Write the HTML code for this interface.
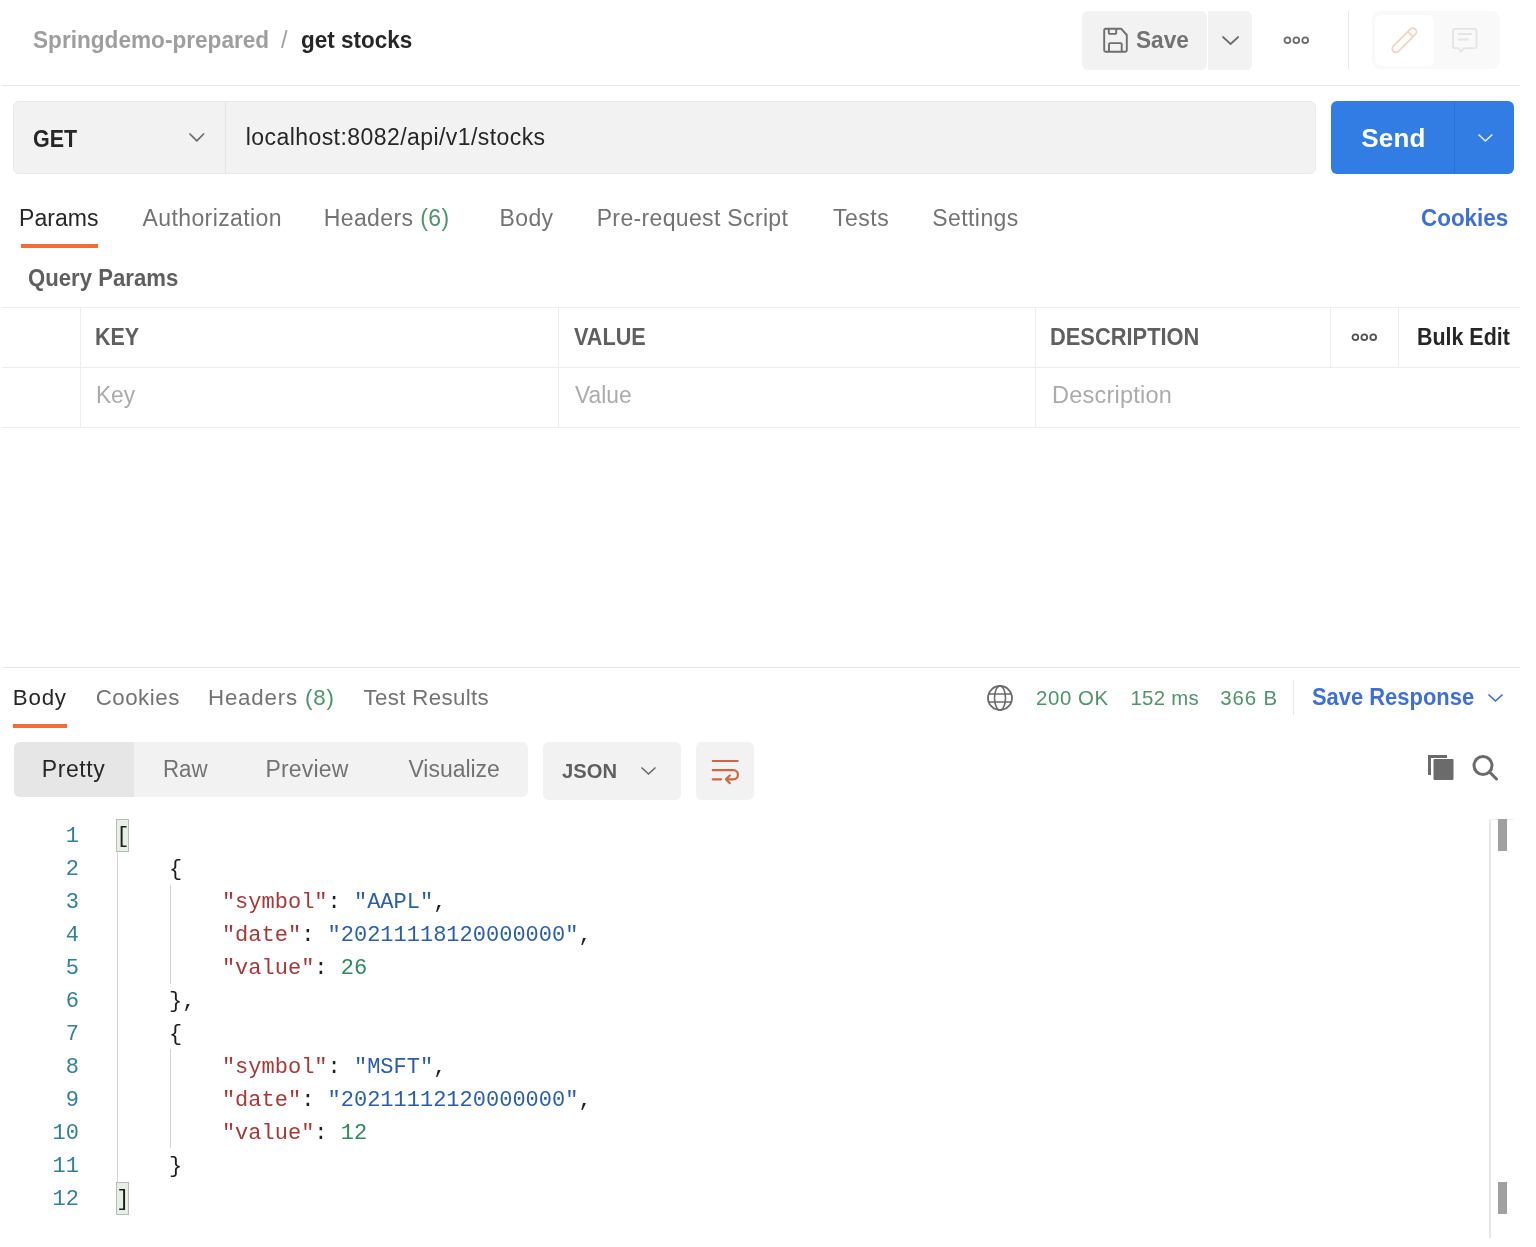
<!DOCTYPE html>
<html><head><meta charset="utf-8">
<style>
html,body{margin:0;padding:0;width:1536px;height:1247px;overflow:hidden;background:#fff;}
body{position:relative;font-family:"Liberation Sans",sans-serif;}
.a{position:absolute;box-sizing:border-box;}
.t{position:absolute;white-space:pre;line-height:normal;font-family:"Liberation Sans",sans-serif;}
.hl{position:absolute;height:1px;background:#e6e6e6;}
.vl{position:absolute;width:1px;background:#e6e6e6;}
svg{position:absolute;overflow:visible;}
.code{position:absolute;left:0;top:0;font-family:"Liberation Mono",monospace;font-size:22px;white-space:pre;line-height:normal;}
.ln{position:absolute;font-family:"Liberation Mono",monospace;font-size:22px;color:#327f9c;text-align:right;width:80px;white-space:pre;line-height:normal;}
.k{color:#a83838}.s{color:#2a5eab}.n{color:#2e8a5c}.p{color:#1e1e1e}
</style></head><body style="filter:blur(0.6px)">
<!-- header -->
<div class="hl" style="left:2px;top:85px;width:1518px;"></div>
<div class="a" style="left:1082px;top:11px;width:124.5px;height:59px;background:#f2f2f2;border-radius:6px;"></div>
<div class="a" style="left:1208px;top:11px;width:44px;height:59px;background:#f2f2f2;border-radius:0 6px 6px 0;"></div>
<!-- save icon -->
<svg style="left:1102px;top:27px" width="26" height="27" viewBox="0 0 26 27">
 <path d="M3.7 1.7 H19.1 L24.8 8 V23.3 Q24.8 24.8 23.3 24.8 H3.7 Q2.2 24.8 2.2 23.3 V3.2 Q2.2 1.7 3.7 1.7 Z" fill="none" stroke="#6e6e6e" stroke-width="1.9" stroke-linejoin="round"/>
 <path d="M6.8 1.7 V5.9 Q6.8 6.9 7.8 6.9 H13.2 Q14.2 6.9 14.2 5.9 V1.7" fill="none" stroke="#6e6e6e" stroke-width="1.9"/>
 <path d="M7 24.8 V17.1 Q7 16.1 8 16.1 H18.7 Q19.7 16.1 19.7 17.1 V24.8" fill="none" stroke="#6e6e6e" stroke-width="1.9"/>
</svg>
<svg style="left:1220.2px;top:34px" width="21.2" height="13.0"><path d="M3.0 3.0 L10.6 10.0 L18.2 3.0" fill="none" stroke="#6b6b6b" stroke-width="1.7" stroke-linecap="round" stroke-linejoin="round"/></svg>
<!-- ooo -->
<svg style="left:1283px;top:36px" width="27" height="9" viewBox="0 0 27 9">
 <circle cx="4.4" cy="4.2" r="2.9" fill="none" stroke="#6b6b6b" stroke-width="1.8"/>
 <circle cx="13.3" cy="4.2" r="2.9" fill="none" stroke="#6b6b6b" stroke-width="1.8"/>
 <circle cx="22.2" cy="4.2" r="2.9" fill="none" stroke="#6b6b6b" stroke-width="1.8"/>
</svg>
<div class="vl" style="left:1348px;top:11px;height:58px;"></div>
<div class="a" style="left:1372px;top:11px;width:128px;height:58px;background:#f9f9f9;border-radius:8px;"></div>
<div class="a" style="left:1375px;top:15px;width:59px;height:51px;background:#fff;border-radius:6px;"></div>
<svg style="left:1388px;top:24px" width="32" height="32" viewBox="0 0 32 32">
 <g transform="rotate(-45 16.35 16.25)">
  <rect x="0.75" y="12.6" width="31.2" height="7.3" rx="3.65" fill="none" stroke="#f7d0c2" stroke-width="1.7"/>
  <path d="M25 12.6 V19.9" fill="none" stroke="#f7d0c2" stroke-width="1.7"/>
 </g>
</svg>
<svg style="left:1450px;top:25px" width="30" height="30" viewBox="0 0 30 30">
 <path d="M4.5 3.8 H25 Q26.5 3.8 26.5 5.3 V21.7 Q26.5 23.2 25 23.2 H14 L11 26.5 L8 23.2 H4.5 Q3 23.2 3 21.7 V5.3 Q3 3.8 4.5 3.8 Z" fill="none" stroke="#e4e4e4" stroke-width="1.8" stroke-linejoin="round"/>
 <path d="M7.7 9 H22 M7.7 14.5 H18.5" fill="none" stroke="#e4e4e4" stroke-width="1.8"/>
</svg>
<!-- url row -->
<div class="a" style="left:13px;top:101px;width:1303px;height:73px;background:#f2f2f2;border:1px solid #e9e9e9;border-radius:6px;"></div>
<div class="vl" style="left:225px;top:102px;height:71px;background:#e4e4e4;"></div>
<svg style="left:186.6px;top:131.2px" width="19.6" height="12.8"><path d="M3.0 3.0 L9.8 9.8 L16.6 3.0" fill="none" stroke="#6b6b6b" stroke-width="1.7" stroke-linecap="round" stroke-linejoin="round"/></svg>
<div class="a" style="left:1331px;top:101px;width:183px;height:73px;background:#327de3;border-radius:6px;"></div>
<div class="vl" style="left:1454px;top:101px;height:73px;background:#2e72d2;"></div>
<svg style="left:1475.6px;top:131.6px" width="18.8" height="12.0"><path d="M3.0 3.0 L9.4 9.0 L15.8 3.0" fill="none" stroke="#e2ecfb" stroke-width="1.7" stroke-linecap="round" stroke-linejoin="round"/></svg>
<!-- tabs -->
<div class="a" style="left:21px;top:243.5px;width:77px;height:4px;background:#f26b3a;"></div>
<!-- table -->
<div class="hl" style="left:2px;top:307px;width:1518px;background:#ededed;"></div>
<div class="hl" style="left:2px;top:367px;width:1518px;background:#ededed;"></div>
<div class="hl" style="left:2px;top:427px;width:1518px;background:#ededed;"></div>
<div class="vl" style="left:80px;top:307px;height:121px;background:#ededed;"></div>
<div class="vl" style="left:558px;top:307px;height:121px;background:#ededed;"></div>
<div class="vl" style="left:1035px;top:307px;height:121px;background:#ededed;"></div>
<div class="vl" style="left:1330px;top:307px;height:61px;background:#ededed;"></div>
<div class="vl" style="left:1398px;top:307px;height:61px;background:#ededed;"></div>
<svg style="left:1351px;top:333px" width="27" height="9" viewBox="0 0 27 9">
 <circle cx="4.4" cy="4.2" r="2.9" fill="none" stroke="#505050" stroke-width="1.8"/>
 <circle cx="13.3" cy="4.2" r="2.9" fill="none" stroke="#505050" stroke-width="1.8"/>
 <circle cx="22.2" cy="4.2" r="2.9" fill="none" stroke="#505050" stroke-width="1.8"/>
</svg>
<!-- response -->
<div class="hl" style="left:2px;top:667px;width:1518px;"></div>
<div class="a" style="left:13px;top:723.5px;width:54px;height:4px;background:#f26b3a;"></div>
<svg style="left:986px;top:684px" width="28" height="28" viewBox="0 0 28 28">
 <circle cx="14" cy="14" r="12" fill="none" stroke="#6b6b6b" stroke-width="1.8"/>
 <ellipse cx="14" cy="14" rx="5.5" ry="12" fill="none" stroke="#6b6b6b" stroke-width="1.6"/>
 <path d="M2.5 10 H25.5 M2.5 18 H25.5" fill="none" stroke="#6b6b6b" stroke-width="1.6"/>
</svg>
<div class="vl" style="left:1293px;top:680px;height:35px;"></div>
<svg style="left:1486px;top:691.8px" width="19.0" height="12.0"><path d="M3.0 3.0 L9.5 9.0 L16.0 3.0" fill="none" stroke="#3d6fd4" stroke-width="1.7" stroke-linecap="round" stroke-linejoin="round"/></svg>
<div class="a" style="left:13.5px;top:742px;width:514px;height:55px;background:#f2f2f2;border-radius:6px;"></div>
<div class="a" style="left:13.5px;top:742px;width:120.5px;height:55px;background:#e6e6e6;border-radius:6px 0 0 6px;"></div>
<div class="a" style="left:543px;top:742px;width:138px;height:58px;background:#f2f2f2;border-radius:6px;"></div>
<svg style="left:639px;top:765px" width="19.0" height="12.0"><path d="M3.0 3.0 L9.5 9.0 L16.0 3.0" fill="none" stroke="#6b6b6b" stroke-width="1.7" stroke-linecap="round" stroke-linejoin="round"/></svg>
<div class="a" style="left:696px;top:742px;width:58px;height:58px;background:#f2f2f2;border-radius:6px;"></div>
<svg style="left:711px;top:759px" width="29" height="27" viewBox="0 0 29 27">
 <path d="M1.8 2 H26.7 M1.8 11.2 H22.4 A4.55 4.55 0 0 1 22.4 20.3 H15.5 M1.8 20.3 H10.1" fill="none" stroke="#d2653f" stroke-width="2.2" stroke-linecap="round"/>
 <path d="M18.8 16.4 L15 20.3 L18.8 24.2" fill="none" stroke="#d2653f" stroke-width="2.2" stroke-linecap="round" stroke-linejoin="round"/>
</svg>
<svg style="left:1427px;top:754px" width="28" height="27" viewBox="0 0 28 27">
 <path d="M2.5 21 V2.5 H20" fill="none" stroke="#6b6b6b" stroke-width="3"/>
 <rect x="6.5" y="5" width="20" height="21" rx="1" fill="#6b6b6b"/>
</svg>
<svg style="left:1470px;top:753px" width="30" height="30" viewBox="0 0 30 30">
 <circle cx="13" cy="12.5" r="9" fill="none" stroke="#6b6b6b" stroke-width="3"/>
 <path d="M19.5 19 L26.5 26" fill="none" stroke="#6b6b6b" stroke-width="3" stroke-linecap="round"/>
</svg>
<!-- editor -->
<div class="a" style="left:1489px;top:819px;width:2px;height:419px;background:#e6e6e6;"></div>
<div class="a" style="left:1489px;top:819px;width:25px;height:1px;background:#f0f0f0;"></div>
<div class="a" style="left:1498px;top:819px;width:9px;height:32px;background:#a0a0a0;"></div>
<div class="a" style="left:1498px;top:1181.5px;width:9px;height:32.5px;background:#a0a0a0;"></div>
<div class="a" style="left:116.5px;top:851px;width:1px;height:331px;background:#d3d3d3;"></div>
<div class="a" style="left:169.5px;top:884.5px;width:1px;height:99px;background:#d3d3d3;"></div>
<div class="a" style="left:169.5px;top:1049px;width:1px;height:99px;background:#d3d3d3;"></div>
<div class="a" style="left:116px;top:819px;width:13px;height:33px;background:#e5efe5;border:1px solid #b9b9b9;"></div>
<div class="a" style="left:116px;top:1181.5px;width:13px;height:33px;background:#e5efe5;border:1px solid #b9b9b9;"></div>
<div class="ln" style="left:-1px;top:824.30px">1</div>
<div class="code" style="left:116.3px;top:824.30px"><span class="p">[</span></div>
<div class="ln" style="left:-1px;top:857.25px">2</div>
<div class="code" style="left:116.3px;top:857.25px"><span class="p">    {</span></div>
<div class="ln" style="left:-1px;top:890.20px">3</div>
<div class="code" style="left:116.3px;top:890.20px"><span class="p">        </span><span class="k">"symbol"</span><span class="p">: </span><span class="s">"AAPL"</span><span class="p">,</span></div>
<div class="ln" style="left:-1px;top:923.15px">4</div>
<div class="code" style="left:116.3px;top:923.15px"><span class="p">        </span><span class="k">"date"</span><span class="p">: </span><span class="s">"20211118120000000"</span><span class="p">,</span></div>
<div class="ln" style="left:-1px;top:956.10px">5</div>
<div class="code" style="left:116.3px;top:956.10px"><span class="p">        </span><span class="k">"value"</span><span class="p">: </span><span class="n">26</span></div>
<div class="ln" style="left:-1px;top:989.05px">6</div>
<div class="code" style="left:116.3px;top:989.05px"><span class="p">    },</span></div>
<div class="ln" style="left:-1px;top:1022.00px">7</div>
<div class="code" style="left:116.3px;top:1022.00px"><span class="p">    {</span></div>
<div class="ln" style="left:-1px;top:1054.95px">8</div>
<div class="code" style="left:116.3px;top:1054.95px"><span class="p">        </span><span class="k">"symbol"</span><span class="p">: </span><span class="s">"MSFT"</span><span class="p">,</span></div>
<div class="ln" style="left:-1px;top:1087.90px">9</div>
<div class="code" style="left:116.3px;top:1087.90px"><span class="p">        </span><span class="k">"date"</span><span class="p">: </span><span class="s">"20211112120000000"</span><span class="p">,</span></div>
<div class="ln" style="left:-1px;top:1120.85px">10</div>
<div class="code" style="left:116.3px;top:1120.85px"><span class="p">        </span><span class="k">"value"</span><span class="p">: </span><span class="n">12</span></div>
<div class="ln" style="left:-1px;top:1153.80px">11</div>
<div class="code" style="left:116.3px;top:1153.80px"><span class="p">    }</span></div>
<div class="ln" style="left:-1px;top:1186.75px">12</div>
<div class="code" style="left:116.3px;top:1186.75px"><span class="p">]</span></div>
<div class="t" style="left:33.32px;top:27.00px;font-size:23.5px;font-weight:700;color:#9e9e9e;letter-spacing:0.000px;transform:scaleX(0.9621);transform-origin:0 0">Springdemo-prepared</div>
<div class="t" style="left:281.00px;top:27.00px;font-size:23.5px;font-weight:400;color:#9e9e9e;letter-spacing:0.000px">/</div>
<div class="t" style="left:300.90px;top:27.00px;font-size:23.5px;font-weight:700;color:#262626;letter-spacing:0.000px;transform:scaleX(0.9560);transform-origin:0 0">get stocks</div>
<div class="t" style="left:1136.32px;top:27.00px;font-size:23.5px;font-weight:700;color:#737373;letter-spacing:0.000px;transform:scaleX(0.9644);transform-origin:0 0">Save</div>
<div class="t" style="left:33.14px;top:125.70px;font-size:23px;font-weight:700;color:#262626;letter-spacing:0.000px;transform:scaleX(0.9325);transform-origin:0 0">GET</div>
<div class="t" style="left:245.75px;top:124.00px;font-size:23px;font-weight:400;color:#262626;letter-spacing:0.433px">localhost:8082/api/v1/stocks</div>
<div class="t" style="left:1361.22px;top:123.00px;font-size:26px;font-weight:700;color:#ffffff;letter-spacing:0.200px">Send</div>
<div class="t" style="left:19.10px;top:204.50px;font-size:23px;font-weight:400;color:#262626;letter-spacing:0.034px">Params</div>
<div class="t" style="left:142.54px;top:204.50px;font-size:23px;font-weight:400;color:#737373;letter-spacing:0.391px">Authorization</div>
<div class="t" style="left:323.70px;top:204.50px;font-size:23px;font-weight:400;color:#737373;letter-spacing:0.394px"><span style="color:#737373">Headers </span><span style="color:#4f9468">(6)</span></div>
<div class="t" style="left:499.50px;top:204.50px;font-size:23px;font-weight:400;color:#737373;letter-spacing:0.372px">Body</div>
<div class="t" style="left:596.70px;top:204.50px;font-size:23px;font-weight:400;color:#737373;letter-spacing:0.344px">Pre-request Script</div>
<div class="t" style="left:832.98px;top:204.50px;font-size:23px;font-weight:400;color:#737373;letter-spacing:0.529px">Tests</div>
<div class="t" style="left:932.26px;top:204.50px;font-size:23px;font-weight:400;color:#737373;letter-spacing:0.422px">Settings</div>
<div class="t" style="left:1420.80px;top:204.50px;font-size:23px;font-weight:700;color:#3d6fd4;letter-spacing:0.000px;transform:scaleX(0.9757);transform-origin:0 0">Cookies</div>
<div class="t" style="left:28.41px;top:264.70px;font-size:23px;font-weight:700;color:#5f5f5f;letter-spacing:0.000px;transform:scaleX(0.9630);transform-origin:0 0">Query Params</div>
<div class="t" style="left:94.95px;top:322.50px;font-size:23.8px;font-weight:700;color:#5f5f5f;letter-spacing:0.000px;transform:scaleX(0.9010);transform-origin:0 0">KEY</div>
<div class="t" style="left:573.74px;top:322.50px;font-size:23.8px;font-weight:700;color:#5f5f5f;letter-spacing:0.000px;transform:scaleX(0.9104);transform-origin:0 0">VALUE</div>
<div class="t" style="left:1050.42px;top:322.50px;font-size:23.8px;font-weight:700;color:#5f5f5f;letter-spacing:0.000px;transform:scaleX(0.9187);transform-origin:0 0">DESCRIPTION</div>
<div class="t" style="left:1417.45px;top:322.50px;font-size:23.8px;font-weight:700;color:#262626;letter-spacing:0.000px;transform:scaleX(0.9001);transform-origin:0 0">Bulk Edit</div>
<div class="t" style="left:96.43px;top:382.00px;font-size:23.5px;font-weight:400;color:#ababab;letter-spacing:0.000px;transform:scaleX(0.9641);transform-origin:0 0">Key</div>
<div class="t" style="left:575.29px;top:382.00px;font-size:23.5px;font-weight:400;color:#ababab;letter-spacing:0.000px;transform:scaleX(0.9716);transform-origin:0 0">Value</div>
<div class="t" style="left:1052.06px;top:382.00px;font-size:23.5px;font-weight:400;color:#ababab;letter-spacing:0.231px">Description</div>
<div class="t" style="left:12.76px;top:684.60px;font-size:22.3px;font-weight:400;color:#262626;letter-spacing:0.817px">Body</div>
<div class="t" style="left:95.69px;top:684.60px;font-size:22.3px;font-weight:400;color:#737373;letter-spacing:0.506px">Cookies</div>
<div class="t" style="left:207.96px;top:684.60px;font-size:22.3px;font-weight:400;color:#737373;letter-spacing:0.833px"><span style="color:#737373">Headers </span><span style="color:#4f9468">(8)</span></div>
<div class="t" style="left:363.50px;top:684.60px;font-size:22.3px;font-weight:400;color:#737373;letter-spacing:0.346px">Test Results</div>
<div class="t" style="left:1035.98px;top:687.00px;font-size:20.4px;font-weight:400;color:#4f9468;letter-spacing:0.614px">200 OK</div>
<div class="t" style="left:1130.47px;top:687.00px;font-size:20.4px;font-weight:400;color:#4f9468;letter-spacing:0.266px">152 ms</div>
<div class="t" style="left:1220.23px;top:687.00px;font-size:20.4px;font-weight:400;color:#4f9468;letter-spacing:0.873px">366 B</div>
<div class="t" style="left:1312.34px;top:684.00px;font-size:23.5px;font-weight:700;color:#3d6fd4;letter-spacing:0.000px;transform:scaleX(0.9329);transform-origin:0 0">Save Response</div>
<div class="t" style="left:41.80px;top:755.50px;font-size:23px;font-weight:400;color:#262626;letter-spacing:0.594px">Pretty</div>
<div class="t" style="left:163.16px;top:755.50px;font-size:23px;font-weight:400;color:#737373;letter-spacing:0.000px;transform:scaleX(0.9692);transform-origin:0 0">Raw</div>
<div class="t" style="left:265.40px;top:755.50px;font-size:23px;font-weight:400;color:#737373;letter-spacing:0.203px">Preview</div>
<div class="t" style="left:408.49px;top:755.50px;font-size:23px;font-weight:400;color:#737373;letter-spacing:-0.038px">Visualize</div>
<div class="t" style="left:562.20px;top:759.20px;font-size:20.8px;font-weight:700;color:#5f5f5f;letter-spacing:0.000px;transform:scaleX(0.9706);transform-origin:0 0">JSON</div>
</body></html>
